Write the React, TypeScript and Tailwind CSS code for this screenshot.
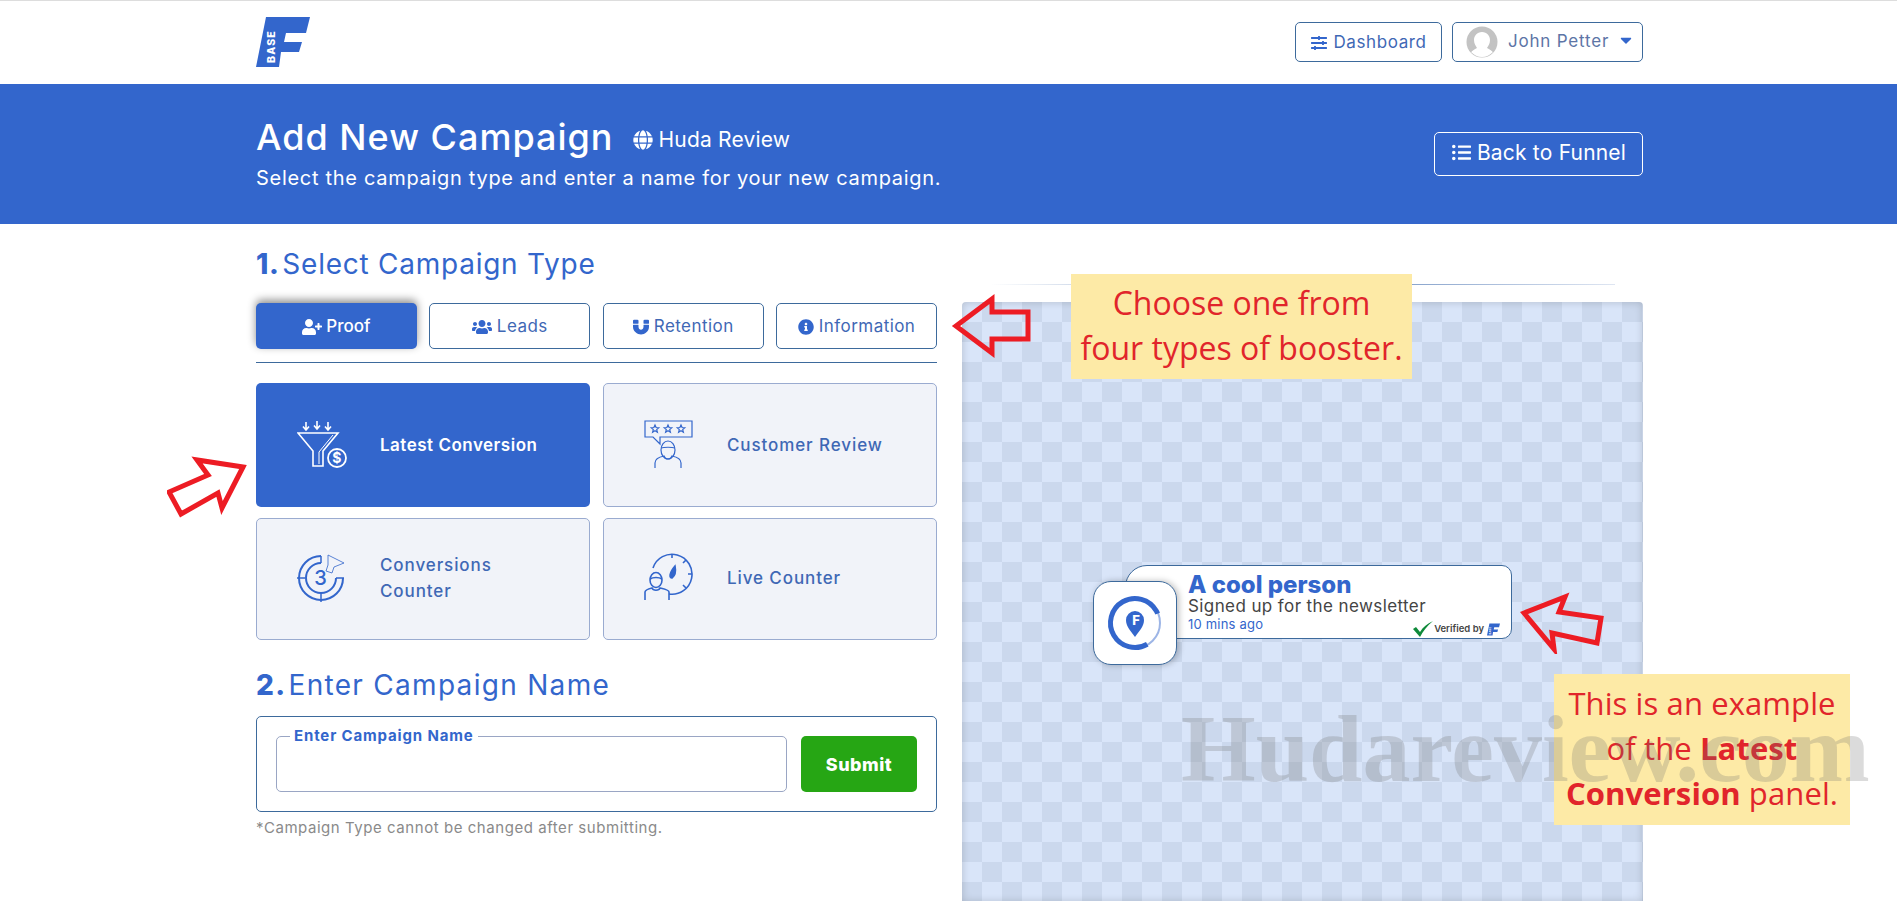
import React from 'react';
import { FaCaretDown, FaGlobe, FaInfoCircle, FaListUl, FaMagnet, FaSlidersH, FaUserPlus, FaUsers } from 'react-icons/fa';

const BLUE = '#3366cc';

const LogoF = ({ className }: { className?: string }) => (
  <svg className={className} viewBox="0 0 54 50" xmlns="http://www.w3.org/2000/svg">
    <path d="M10 0H54L50 16H30L28 25H46L43 35H25L23 50H0Z" fill={BLUE} />
    <text x="0" y="0" transform="translate(18.5 46) rotate(-90)" fill="#fff" fontSize="10.5" fontWeight="800" letterSpacing="1.2" fontFamily="Inter, sans-serif">BASE</text>
  </svg>
);

const Avatar = () => (
  <svg width="32" height="32" viewBox="0 0 32 32" xmlns="http://www.w3.org/2000/svg">
    <circle cx="16" cy="16" r="15.5" fill="#c3c3c3" />
    <path d="M16 6c5 0 8 4 8 8 0 4-2 6-3 8 2 1 4 2 6 4-3 3-7 5-11 5s-8-2-11-5c2-2 4-3 6-4-1-2-3-4-3-8 0-4 3-8 8-8Z" fill="#fff" />
    <path d="M10 22c-2 1-4 2-5 4l-2-3 1-8 6 7ZM22 22c2 1 4 2 5 4l2-3-1-8-6 7Z" fill="#c3c3c3" />
  </svg>
);

const FunnelIcon = () => (
  <svg width="50" height="47" viewBox="0 0 50 47" fill="none" stroke="#fff" strokeWidth="1.6" xmlns="http://www.w3.org/2000/svg">
    <path d="M1 12H41L26 30V45H16V30Z" />
    <path d="M36 14 22 31V43" strokeWidth="1" />
    <path d="M9 1V8M6 5.5 9 9l3-3.5M20 0V7M17 4.5 20 8l3-3.5M31 1V8M28 5.5 31 9l3-3.5" />
    <circle cx="40" cy="37" r="9" fill={BLUE} strokeWidth="1.8" />
    <text x="40" y="42" textAnchor="middle" fill="#fff" stroke="none" fontSize="14" fontWeight="700" fontFamily="Inter, sans-serif">$</text>
  </svg>
);

const star = (cx: number, cy: number) => {
  const pts: string[] = [];
  for (let i = 0; i < 10; i++) {
    const r = i % 2 ? 1.8 : 4;
    const a = (Math.PI / 5) * i - Math.PI / 2;
    pts.push(`${(cx + r * Math.cos(a)).toFixed(1)},${(cy + r * Math.sin(a)).toFixed(1)}`);
  }
  return pts.join(' ');
};

const ReviewIcon = () => (
  <svg width="50" height="50" viewBox="0 0 50 50" fill="none" stroke={BLUE} strokeWidth="1.2" xmlns="http://www.w3.org/2000/svg">
    <path d="M1 1H48V17H16V24L9 17H1Z" />
    <polygon points={star(11, 9)} />
    <polygon points={star(24, 9)} />
    <polygon points={star(37, 9)} />
    <ellipse cx="24" cy="30" rx="7" ry="9" fill="#f1f3f9" />
    <path d="M17 28C20 27 28 27 31 28" />
    <path d="M11 48V43C11 39 15 37 20 36C21 40 27 40 28 36C33 37 37 39 37 43V48" />
  </svg>
);

const CounterIcon = () => (
  <svg width="50" height="50" viewBox="0 0 50 50" fill="none" stroke={BLUE} strokeWidth="1.5" xmlns="http://www.w3.org/2000/svg">
    <path d="M24 3A22 22 0 1 0 46 25" strokeWidth="2" />
    <path d="M24 10A15 15 0 1 0 39 25" strokeWidth="2" />
    <path d="M0 25H8M24 40V49M24 3V10M39 25H47" />
    <text x="24" y="32" textAnchor="middle" fill={BLUE} stroke="none" fontSize="20" fontFamily="Inter, sans-serif">3</text>
    <path d="M31 2 47 10 37 14 35 20 29 18 31 12Z" strokeWidth="0.8" />
  </svg>
);

const LiveIcon = () => (
  <svg width="50" height="50" viewBox="0 0 50 50" fill="none" stroke={BLUE} strokeWidth="1.6" xmlns="http://www.w3.org/2000/svg">
    <path d="M9 15A20 20 0 1 1 25 41" />
    <path d="M28 1V5M42 7l-3 3M48 21h-4M42 35l-3-3" />
    <path d="M31 13C32 18 31 23 28 25C25 25 25 20 31 13Z" fill={BLUE} />
    <ellipse cx="12" cy="27" rx="6" ry="7.5" fill="#f1f3f9" />
    <path d="M6 26C9 24 15 24 18 26" />
    <path d="M1 47V39C1 37 4 36 8 35C9 38 15 38 16 35C20 36 25 37 25 39V47" />
  </svg>
);

const PinBadge = () => (
  <svg width="60" height="60" viewBox="0 0 60 60" fill="none" xmlns="http://www.w3.org/2000/svg">
    <circle cx="30" cy="30" r="25" stroke="#9db5e6" strokeWidth="2" />
    <circle cx="30" cy="30" r="24.5" stroke={BLUE} strokeWidth="5" strokeDasharray="118 36" transform="rotate(60 30 30)" />
    <path d="M30 44C25 37 21 33 21 27A9 9 0 0 1 39 27C39 33 35 37 30 44Z" fill={BLUE} />
    <text x="31" y="32" textAnchor="middle" fill="#fff" fontSize="13" fontWeight="800" fontFamily="Inter, sans-serif">F</text>
  </svg>
);

const Check = () => (
  <svg width="20" height="16" viewBox="0 0 20 16" xmlns="http://www.w3.org/2000/svg">
    <path d="M0 8 3 6 7 11C10 6 14 3 20 0C14 5 10 10 7 16Z" fill="#0f8a3a" />
  </svg>
);

// outlined annotation arrows, pasted over the screenshot
const Arrow = ({ className, points, w, h }: { className: string; points: string; w: number; h: number }) => (
  <svg className={`absolute ${className}`} width={w} height={h} viewBox={`0 0 ${w} ${h}`} fill="none" xmlns="http://www.w3.org/2000/svg">
    <polygon points={points} stroke="#ed1c24" strokeWidth="5" strokeLinejoin="miter" />
  </svg>
);

const tabs = [
  { label: 'Proof', icon: <FaUserPlus className="w-[20px] h-[16px]" />, active: true },
  { label: 'Leads', icon: <FaUsers className="w-[20px] h-[16px]" /> },
  { label: 'Retention', icon: <FaMagnet className="w-[16px] h-[16px]" /> },
  { label: 'Information', icon: <FaInfoCircle className="w-[16px] h-[16px]" /> },
];

const cards = [
  { label: 'Latest Conversion', icon: <FunnelIcon />, active: true, pad: 'pb-[1px]' },
  { label: 'Customer Review', icon: <ReviewIcon />, pad: 'pb-[1px]' },
  { label: 'Conversions Counter', icon: <CounterIcon />, pad: 'pb-[2px]' },
  { label: 'Live Counter', icon: <LiveIcon />, pad: 'pb-[2px]' },
];

export default function App() {
  return (
    <div className="relative h-[901px] w-[1897px] overflow-hidden bg-white font-['Inter',sans-serif] text-[#3366cc]">
      {/* Navbar */}
      <nav className="h-[84px] border-t border-[#dddddd] bg-white">
        <div className="ml-[256px] flex h-full w-[1387px] items-center justify-between pb-[2px]">
          <LogoF className="h-[50px] w-[54px]" />
          <div className="flex gap-[10px]">
            <button className="flex h-[40px] w-[147px] items-center justify-center gap-[5px] rounded-[5px] border border-[#3d6a9c] pt-[2px] text-[17px] tracking-[0.6px] text-[#3f68b5]">
              <FaSlidersH className="h-[16px] w-[18px] text-[#3366cc]" />
              Dashboard
            </button>
            <button className="flex h-[40px] w-[191px] items-center gap-[10px] rounded-[5px] border border-[#3d6a9c] pl-[13px] text-[17px] tracking-[0.8px] text-[#5d75a6]">
              <Avatar />
              John Petter
              <FaCaretDown className="-ml-[2px] mb-[4px] h-[18px] w-[18px] text-[#3366cc]" />
            </button>
          </div>
        </div>
      </nav>

      {/* Blue header */}
      <header className="h-[140px] bg-[#3366cc] text-white">
        <div className="ml-[256px] flex h-full w-[1387px] items-center justify-between">
          <div className="pb-[2px]">
            <div className="flex items-center">
              <h1 className="text-[36px] leading-[44px] font-medium tracking-[1px]">Add New Campaign</h1>
              <span className="ml-[20px] flex items-center gap-[5px] pt-[5px] text-[21px] tracking-[0.2px]">
                <FaGlobe className="h-[20px] w-[20px]" />
                Huda Review
              </span>
            </div>
            <p className="mt-[6px] text-[20px] leading-[26px] tracking-[0.7px]">Select the campaign type and enter a name for your new campaign.</p>
          </div>
          <button className="mb-[1px] flex h-[44px] w-[209px] items-center justify-center gap-[5px] rounded-[5px] border border-white pb-[2px] text-[21px] tracking-[0.2px]">
            <FaListUl className="h-[19px] w-[21px]" />
            Back to Funnel
          </button>
        </div>
      </header>

      {/* Main two column area */}
      <main className="ml-[256px] flex w-[1387px] gap-[25px]">
        <section className="w-[681px] pt-[24px]">
          <h2 className="text-[28px] leading-[32px] tracking-[0.75px]">
            <b className="mr-[-6px] font-extrabold">1.</b> Select Campaign Type
          </h2>
          <div className="mt-[23px] grid grid-cols-4 gap-[12.6px]">
            {tabs.map((t) => (
              <button
                key={t.label}
                className={
                  t.active
                    ? 'flex h-[46px] items-center justify-center gap-[4px] rounded-[5px] bg-[#3366cc] pt-[1px] text-[17px] font-medium text-white shadow-[0_-3px_8px_rgba(0,0,0,0.45)]'
                    : 'flex h-[46px] items-center justify-center gap-[5px] rounded-[5px] border border-[#3d6a9c] pt-[1px] text-[17px] tracking-[0.45px] text-[#3f68b5]'
                }
              >
                <span className={t.active ? 'text-white' : 'text-[#3366cc]'}>{t.icon}</span>
                {t.label}
              </button>
            ))}
          </div>
          <div className="mt-[13px] h-px bg-[#3d6a9c]" />
          <div className="mt-[20px] grid grid-cols-2 gap-x-[13px] gap-y-[11px]">
            {cards.map((c, i) => (
              <div
                key={c.label}
                className={
                  (i < 2 ? 'h-[124px] ' : 'h-[122px] ') +
                  c.pad +
                  (c.active
                    ? ' flex items-center rounded-[5px] bg-[#3366cc] pl-[41px] tracking-[0.5px] text-white font-semibold'
                    : ' flex items-center rounded-[5px] border border-[#9aabd0] bg-[#f1f3f9] pl-[40px] tracking-[0.9px] text-[#3f68b5] font-medium')
                }
              >
                <div className="w-[83px] shrink-0">{c.icon}</div>
                <span className="w-[170px] text-[17px] leading-[26px]">{c.label}</span>
              </div>
            ))}
          </div>
          <h2 className="mt-[29px] text-[28px] leading-[32px] tracking-[1.3px]">
            <b className="mr-[-7px] font-extrabold">2.</b> Enter Campaign Name
          </h2>
          <div className="mt-[15px] flex h-[96px] items-center gap-[14px] rounded-[5px] border border-[#3d6a9c] px-[19px]">
            <div className="relative h-[56px] flex-1 rounded-[5px] border border-[#9aa6c4]">
              <span className="absolute -top-[10px] left-[13px] bg-white px-[4px] text-[15px] leading-[18px] font-bold tracking-[0.85px]">Enter Campaign Name</span>
            </div>
            <button className="h-[56px] w-[116px] rounded-[5px] bg-[#26a614] text-[18px] font-extrabold tracking-[0.5px] text-white">Submit</button>
          </div>
          <p className="mt-[6px] text-[15px] leading-[20px] tracking-[0.55px] text-[#8a8a8a]">*Campaign Type cannot be changed after submitting.</p>
        </section>

        <section className="w-[681px] pt-[60px]">
          <div className="mx-[28px] h-px bg-gradient-to-r from-transparent via-[#5f83b8] to-[#dfe6f2]" />
          <div className="relative mt-[17px] h-[600px] rounded-t-[4px] bg-[repeating-conic-gradient(#cbd8ed_0_25%,#d9e5f9_0_50%)] bg-[length:40px_40px] shadow-[inset_0_0_8px_rgba(0,0,0,0.18)]">
            {/* Notification preview */}
            <div className="absolute left-[163px] top-[263px] h-[74px] w-[387px] rounded-[10px] rounded-tl-[22px] border border-[#3d6a9c] bg-white pl-[62px]">
              <div className="mt-[6px] text-[24px] leading-[25px] font-extrabold">A cool person</div>
              <div className="text-[17px] leading-[18px] tracking-[0.4px] text-[#444444]">Signed up for the newsletter</div>
              <div className="mt-[1px] text-[13px] leading-[16px] tracking-[0.2px]">10 mins ago</div>
              <div className="absolute right-[11px] bottom-[1px] flex items-center gap-[1px] text-[9.5px] font-semibold text-[#444444]">
                <Check />
                Verified by
                <LogoF className="ml-[2px] h-[13px] w-[13px]" />
              </div>
            </div>
            <div className="absolute left-[131px] top-[279px] flex h-[84px] w-[84px] items-center justify-center rounded-[18px] border border-[#3d6a9c] bg-white shadow-[2px_0_6px_rgba(0,0,0,0.25)]">
              <PinBadge />
            </div>
          </div>
        </section>
      </main>

      {/* Review site annotations laid over the page */}
      <Arrow className="left-[950px] top-[293px]" w={84} h={66} points="6,33 42,6 42,19 78,19 78,46 42,46 42,60" />
      <Arrow className="left-[167px] top-[456px]" w={82} h={62} points="76,11 55,52 51,37 14,58 2,36 41,19 30,4" />
      <Arrow className="left-[1520px] top-[592px]" w={84} h={62} points="4,21 45,5 39,20 81,26 77,51 32,41 34,57" />

      <div className="absolute left-[1071px] top-[274px] flex h-[105px] w-[341px] flex-col items-center justify-center bg-[#fdeaa6] pb-[3px] font-['Open_Sans',sans-serif] text-[32px] leading-[45px] text-[#e1252b]">
        <span>Choose one from</span>
        <span>four types of booster.</span>
      </div>
      <div className="absolute left-[1554px] top-[674px] flex h-[151px] w-[296px] flex-col items-center justify-center bg-[#fdeaa6] pb-[2px] font-['Open_Sans',sans-serif] text-[31px] leading-[45px] tracking-[0.1px] text-[#e1252b]">
        <span>This is an example</span>
        <span>of the <b>Latest</b></span>
        <span><b>Conversion</b> panel.</span>
      </div>

      <div className="pointer-events-none absolute left-[1181px] top-[694px] font-['Liberation_Serif',serif] text-[96px] leading-[110px] font-bold whitespace-nowrap text-[#70707040]">Hudareview.com</div>
    </div>
  );
}
